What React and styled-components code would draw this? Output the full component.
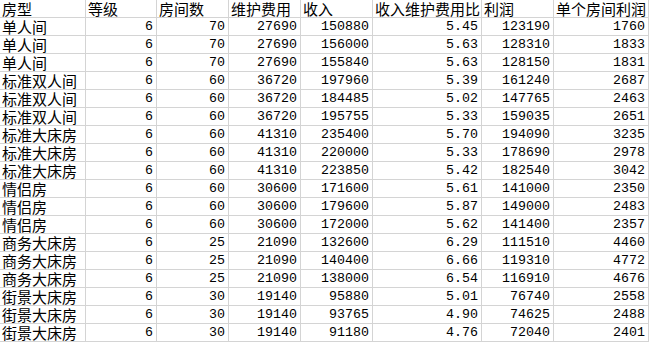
import React from 'react'
import styled, { createGlobalStyle } from 'styled-components'

const GlobalStyle = createGlobalStyle`
  html, body {
    margin: 0;
    padding: 0;
    background: #ffffff;
  }
`

const columns = [
  { title: '房型', width: 86 },
  { title: '等级', width: 71 },
  { title: '房间数', width: 72 },
  { title: '维护费用', width: 72 },
  { title: '收入', width: 72 },
  { title: '收入维护费用比', width: 109 },
  { title: '利润', width: 72 },
  { title: '单个房间利润', width: 95 }
]

const rows = [
  ['单人间', 6, 70, 27690, 150880, '5.45', 123190, 1760],
  ['单人间', 6, 70, 27690, 156000, '5.63', 128310, 1833],
  ['单人间', 6, 70, 27690, 155840, '5.63', 128150, 1831],
  ['标准双人间', 6, 60, 36720, 197960, '5.39', 161240, 2687],
  ['标准双人间', 6, 60, 36720, 184485, '5.02', 147765, 2463],
  ['标准双人间', 6, 60, 36720, 195755, '5.33', 159035, 2651],
  ['标准大床房', 6, 60, 41310, 235400, '5.70', 194090, 3235],
  ['标准大床房', 6, 60, 41310, 220000, '5.33', 178690, 2978],
  ['标准大床房', 6, 60, 41310, 223850, '5.42', 182540, 3042],
  ['情侣房', 6, 60, 30600, 171600, '5.61', 141000, 2350],
  ['情侣房', 6, 60, 30600, 179600, '5.87', 149000, 2483],
  ['情侣房', 6, 60, 30600, 172000, '5.62', 141400, 2357],
  ['商务大床房', 6, 25, 21090, 132600, '6.29', 111510, 4460],
  ['商务大床房', 6, 25, 21090, 140400, '6.66', 119310, 4772],
  ['商务大床房', 6, 25, 21090, 138000, '6.54', 116910, 4676],
  ['街景大床房', 6, 30, 19140, 95880, '5.01', 76740, 2558],
  ['街景大床房', 6, 30, 19140, 93765, '4.90', 74625, 2488],
  ['街景大床房', 6, 30, 19140, 91180, '4.76', 72040, 2401]
]

const Sheet = styled.div`
  display: grid;
  grid-template-columns: ${columns.map(c => `${c.width}px`).join(' ')};
  grid-auto-rows: 18px;
  width: 649px;
  background: #ffffff;
`

const Cell = styled.div`
  box-sizing: border-box;
  border-right: 1px solid #d4d4d4;
  border-bottom: 1px solid #d4d4d4;
  display: flex;
  align-items: center;
  justify-content: ${props => (props.$numeric ? 'flex-end' : 'flex-start')};
  padding: ${props => (props.$numeric ? '0 3px 0 0' : '0 0 0 2px')};
  white-space: nowrap;
  color: #000000;
  font-family: ${props =>
    props.$numeric
      ? '"Liberation Mono", "DejaVu Sans Mono", monospace'
      : '"Noto Sans CJK SC", "Noto Sans", sans-serif'};
  font-size: ${props => (props.$numeric ? '13.3px' : '15px')};
  line-height: 17px;
`

export default function App() {
  return (
    <>
      <GlobalStyle />
      <Sheet>
        {columns.map(c => (
          <Cell key={c.title}>{c.title}</Cell>
        ))}
        {rows.map((row, r) =>
          row.map((value, i) => (
            <Cell key={`${r}-${i}`} $numeric={i > 0}>
              {value}
            </Cell>
          ))
        )}
      </Sheet>
    </>
  )
}
